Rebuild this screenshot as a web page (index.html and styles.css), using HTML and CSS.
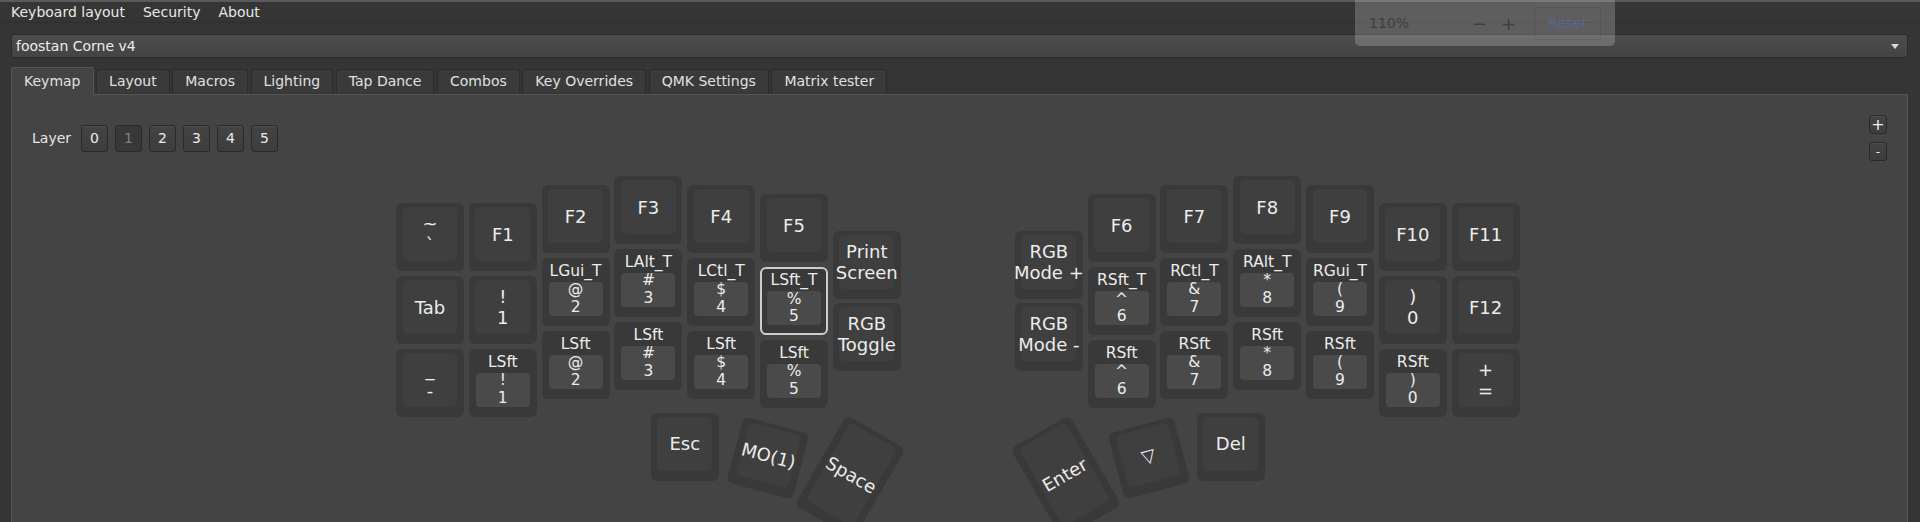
FILE: index.html
```html
<!DOCTYPE html>
<html lang="en">
<head>
<meta charset="utf-8">
<title>Vial - Keymap</title>
<link rel="stylesheet" href="styles.css">
</head>
<body>
<div class="app">
  <div class="topline"></div>
  <nav class="menubar">
    <span class="menu-item">Keyboard layout</span>
    <span class="menu-item">Security</span>
    <span class="menu-item">About</span>
  </nav>
  <div class="combo-row">
    <div class="combo">
      <span class="combo-text">foostan Corne v4</span>
      <span class="combo-arrow"></span>
    </div>
  </div>
  <div class="tabs">
    <div class="tab active">Keymap</div>
    <div class="tab">Layout</div>
    <div class="tab">Macros</div>
    <div class="tab">Lighting</div>
    <div class="tab">Tap Dance</div>
    <div class="tab">Combos</div>
    <div class="tab">Key Overrides</div>
    <div class="tab">QMK Settings</div>
    <div class="tab">Matrix tester</div>
  </div>
  <section class="panel">
    <div class="panel-head">
      <div class="layers">
        <span class="layer-label">Layer</span>
        <button class="lbtn">0</button>
        <button class="lbtn current">1</button>
        <button class="lbtn">2</button>
        <button class="lbtn">3</button>
        <button class="lbtn">4</button>
        <button class="lbtn">5</button>
      </div>
      <div class="size-btns">
        <button class="sbtn">+</button>
        <button class="sbtn minus">-</button>
      </div>
    </div>
    <div class="keyboard">
      <!-- left half -->
      <div class="key" style="--x:0;--y:0.375"><div class="face">~<br>`</div></div>
      <div class="key" style="--x:0;--y:1.375"><div class="face">Tab</div></div>
      <div class="key" style="--x:0;--y:2.375"><div class="face">_<br>-</div></div>

      <div class="key" style="--x:1;--y:0.375"><div class="face">F1</div></div>
      <div class="key" style="--x:1;--y:1.375"><div class="face">!<br>1</div></div>
      <div class="key masked" style="--x:1;--y:2.375"><div class="mod">LSft</div><div class="mask">!<br>1</div></div>

      <div class="key" style="--x:2;--y:0.125"><div class="face">F2</div></div>
      <div class="key masked" style="--x:2;--y:1.125"><div class="mod">LGui_T</div><div class="mask">@<br>2</div></div>
      <div class="key masked" style="--x:2;--y:2.125"><div class="mod">LSft</div><div class="mask">@<br>2</div></div>

      <div class="key" style="--x:3;--y:0"><div class="face">F3</div></div>
      <div class="key masked" style="--x:3;--y:1"><div class="mod">LAlt_T</div><div class="mask">#<br>3</div></div>
      <div class="key masked" style="--x:3;--y:2"><div class="mod">LSft</div><div class="mask">#<br>3</div></div>

      <div class="key" style="--x:4;--y:0.125"><div class="face">F4</div></div>
      <div class="key masked" style="--x:4;--y:1.125"><div class="mod">LCtl_T</div><div class="mask">$<br>4</div></div>
      <div class="key masked" style="--x:4;--y:2.125"><div class="mod">LSft</div><div class="mask">$<br>4</div></div>

      <div class="key" style="--x:5;--y:0.25"><div class="face">F5</div></div>
      <div class="key masked selected" style="--x:5;--y:1.25"><div class="mod">LSft_T</div><div class="mask">%<br>5</div></div>
      <div class="key masked" style="--x:5;--y:2.25"><div class="mod">LSft</div><div class="mask">%<br>5</div></div>

      <div class="key" style="--x:6;--y:0.75"><div class="face">Print<br>Screen</div></div>
      <div class="key" style="--x:6;--y:1.75"><div class="face">RGB<br>Toggle</div></div>

      <div class="key" style="--x:3.5;--y:3.25"><div class="face">Esc</div></div>
      <div class="key rot" style="--x:4.64;--y:3.405;--r:15deg"><div class="face">MO(1)</div></div>
      <div class="key rot tall" style="--x:5.765;--y:3.416;--r:30deg"><div class="face">Space</div></div>

      <!-- right half -->
      <div class="key" style="--x:8.5;--y:0.75"><div class="face">RGB<br>Mode +</div></div>
      <div class="key" style="--x:8.5;--y:1.75"><div class="face">RGB<br>Mode -</div></div>

      <div class="key" style="--x:9.5;--y:0.25"><div class="face">F6</div></div>
      <div class="key masked" style="--x:9.5;--y:1.25"><div class="mod">RSft_T</div><div class="mask">^<br>6</div></div>
      <div class="key masked" style="--x:9.5;--y:2.25"><div class="mod">RSft</div><div class="mask">^<br>6</div></div>

      <div class="key" style="--x:10.5;--y:0.125"><div class="face">F7</div></div>
      <div class="key masked" style="--x:10.5;--y:1.125"><div class="mod">RCtl_T</div><div class="mask">&amp;<br>7</div></div>
      <div class="key masked" style="--x:10.5;--y:2.125"><div class="mod">RSft</div><div class="mask">&amp;<br>7</div></div>

      <div class="key" style="--x:11.5;--y:0"><div class="face">F8</div></div>
      <div class="key masked" style="--x:11.5;--y:1"><div class="mod">RAlt_T</div><div class="mask">*<br>8</div></div>
      <div class="key masked" style="--x:11.5;--y:2"><div class="mod">RSft</div><div class="mask">*<br>8</div></div>

      <div class="key" style="--x:12.5;--y:0.125"><div class="face">F9</div></div>
      <div class="key masked" style="--x:12.5;--y:1.125"><div class="mod">RGui_T</div><div class="mask">(<br>9</div></div>
      <div class="key masked" style="--x:12.5;--y:2.125"><div class="mod">RSft</div><div class="mask">(<br>9</div></div>

      <div class="key" style="--x:13.5;--y:0.375"><div class="face">F10</div></div>
      <div class="key" style="--x:13.5;--y:1.375"><div class="face">)<br>0</div></div>
      <div class="key masked" style="--x:13.5;--y:2.375"><div class="mod">RSft</div><div class="mask">)<br>0</div></div>

      <div class="key" style="--x:14.5;--y:0.375"><div class="face">F11</div></div>
      <div class="key" style="--x:14.5;--y:1.375"><div class="face">F12</div></div>
      <div class="key" style="--x:14.5;--y:2.375"><div class="face">+<br>=</div></div>

      <div class="key rot tall" style="--x:8.735;--y:3.416;--r:-30deg"><div class="face">Enter</div></div>
      <div class="key rot" style="--x:9.87;--y:3.405;--r:-15deg"><div class="face tri">▽</div></div>
      <div class="key" style="--x:11;--y:3.25"><div class="face">Del</div></div>
    </div>
  </section>
  <div class="zoom-popup">
    <span class="zoom-value">110%</span>
    <span class="zoom-op">−</span>
    <span class="zoom-op">+</span>
    <span class="zoom-reset">Reset</span>
  </div>
</div>
</body>
</html>
```
FILE: styles.css
```css
html, body {
  margin: 0;
  padding: 0;
}
body {
  width: 1920px;
  height: 522px;
  overflow: hidden;
  background: #353535;
  color: #e6e6e6;
  font-family: "DejaVu Sans", "Liberation Sans", sans-serif;
  font-size: 14px;
}
.app {
  position: relative;
  height: 522px;
  display: flex;
  flex-direction: column;
}
.topline {
  height: 2px;
  background: #5a5a5a;
  flex: none;
}
.menubar {
  height: 20px;
  display: flex;
  align-items: center;
  padding: 0 2px;
  border-bottom: 1px solid #2e2e2e;
  flex: none;
}
.menu-item {
  padding: 0 9px;
  line-height: 20px;
  color: #e8e8e8;
}
.combo-row {
  padding: 11px 12px 0 11px;
  flex: none;
}
.combo {
  height: 22px;
  border: 1px solid #2b2b2b;
  border-radius: 3px;
  background: linear-gradient(#4c4c4c, #444444);
  display: flex;
  align-items: center;
  justify-content: space-between;
  padding: 0 8px 0 4px;
}
.combo-text {
  color: #ececec;
}
.combo-arrow {
  width: 0;
  height: 0;
  border-left: 4px solid transparent;
  border-right: 4px solid transparent;
  border-top: 5px solid #d8d8d8;
}
.tabs {
  display: flex;
  align-items: flex-end;
  gap: 2.6px;
  padding: 0 11px;
  margin-top: 9px;
  height: 27px;
  flex: none;
}
.tab {
  height: 23px;
  line-height: 23px;
  padding: 0 12px;
  border: 1px solid #2b2b2b;
  border-bottom: none;
  border-radius: 3px 3px 0 0;
  background: #3a3a3a;
  color: #e0e0e0;
  margin-bottom: 1px;
}
.tab.active {
  height: 27px;
  line-height: 27px;
  background: #444444;
  border-color: #555555;
  margin-bottom: -1px;
  position: relative;
  z-index: 1;
}
.panel {
  flex: 1;
  margin: 0 12px 0 11px;
  background: #444444;
  border: 1px solid #555555;
  border-bottom: none;
  padding: 0 20px;
}
.panel-head {
  display: flex;
  justify-content: space-between;
  align-items: center;
  padding-top: 20px;
}
.layers {
  display: flex;
  align-items: center;
  gap: 7px;
}
.layer-label {
  margin-right: 3px;
  color: #e6e6e6;
}
.lbtn, .sbtn {
  font-family: "DejaVu Sans", sans-serif;
  font-size: 14px;
  color: #ececec;
  background: linear-gradient(#434343, #3d3d3d);
  border: 1px solid #2a2a2a;
  border-radius: 3px;
  box-shadow: inset 0 1px 0 #4f4f4f;
  padding: 0;
  width: 27px;
  height: 27px;
  line-height: 25px;
}
.lbtn.current {
  background: #383838;
  color: #808080;
  box-shadow: none;
}
.size-btns {
  display: flex;
  flex-direction: column;
  gap: 8px;
}
.sbtn {
  width: 18px;
  height: 19px;
  line-height: 16px;
  font-size: 16px;
}
.sbtn.minus {
  font-size: 12px;
}
.keyboard {
  position: relative;
  width: 1127px;
  height: 400px;
  margin: 15px auto 0;
}
.key {
  position: absolute;
  left: calc(var(--x) * 72.8px);
  top: calc(var(--y) * 72.8px);
  width: 68px;
  height: 68px;
  background: #393939;
  border-radius: 6px;
}
.key.rot {
  transform: rotate(var(--r));
}
.key.tall {
  height: 104.4px;
}
.face {
  position: absolute;
  left: 6.7px;
  right: 6.7px;
  top: 4px;
  bottom: 10px;
  background: #3f3f3f;
  border-radius: 5px;
  display: flex;
  align-items: center;
  justify-content: center;
  text-align: center;
  font-size: 18px;
  line-height: 21px;
  color: #ececec;
  white-space: nowrap;
}
.face.tri {
  font-size: 18px;
}
.mod {
  position: absolute;
  top: 4px;
  left: 0;
  right: 0;
  height: 18px;
  font-size: 15.5px;
  line-height: 18px;
  text-align: center;
  color: #ececec;
}
.mask {
  position: absolute;
  left: 7px;
  right: 7px;
  top: 24px;
  height: 34px;
  background: #4a4a4a;
  border-radius: 4px;
  display: flex;
  align-items: center;
  justify-content: center;
  text-align: center;
  font-size: 15.5px;
  line-height: 17.4px;
  color: #ececec;
}
.key.selected {
  box-shadow: inset 0 0 0 2px #cdcdcd;
}
.zoom-popup {
  position: absolute;
  left: 1355px;
  top: 0;
  width: 260px;
  height: 46px;
  background: rgba(200, 200, 200, 0.28);
  border-radius: 0 0 5px 5px;
  display: flex;
  align-items: center;
  color: #3e3e3e;
}
.zoom-value {
  margin-left: 14px;
  width: 103px;
}
.zoom-op {
  font-size: 18px;
  width: 29px;
}
.zoom-reset {
  margin-left: 4px;
  width: 65px;
  height: 31px;
  line-height: 31px;
  text-align: center;
  border: 1px solid rgba(0, 0, 0, 0.08);
  color: #56688c;
}
```
